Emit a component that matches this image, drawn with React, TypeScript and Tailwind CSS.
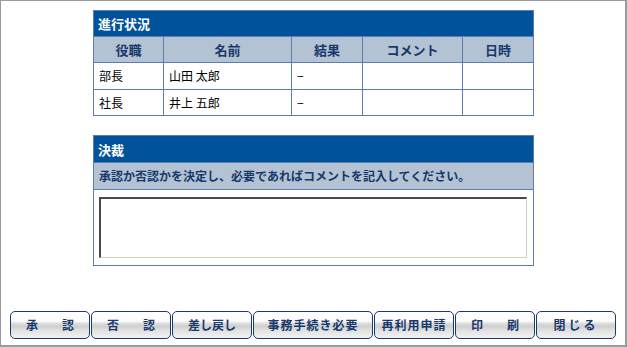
import React from "react";

const font = { fontFamily: '"Noto Sans CJK JP", "Noto Sans", sans-serif' };

const cols = ["役職", "名前", "結果", "コメント", "日時"];
const rows = [
  ["部長", "山田 太郎", "−", "", ""],
  ["社長", "井上 五郎", "−", "", ""],
];

const buttons: { label: string; w: string; track: string }[] = [
  { label: "承　　認", w: "w-[80px]", track: "tracking-[0px]" },
  { label: "否　　認", w: "w-[80px]", track: "tracking-[0px]" },
  { label: "差し戻し", w: "w-[80px]", track: "tracking-[0px]" },
  { label: "事務手続き必要", w: "w-[120px]", track: "tracking-[1px]" },
  { label: "再利用申請", w: "w-[80px]", track: "tracking-[1px]" },
  { label: "印　　刷", w: "w-[80px]", track: "tracking-[0px]" },
  { label: "閉じる", w: "w-[80px]", track: "tracking-[3px]" },
];

export default function App() {
  return (
    <div
      style={font}
      className="w-[627px] h-[347px] bg-white border-t border-l border-r-2 border-b-2 border-[#9a9a9a] flex flex-col box-border overflow-hidden"
    >
      {/* 進行状況 */}
      <div className="pl-[92px] pt-[9px]">
        <div className="w-[441px] border-l border-t border-[#5b7db3]">
          <div className="h-[26px] bg-[#00539b] border-r border-b border-[#5b7db3] flex items-center pl-[4px] text-white text-[13px] font-bold leading-none">
            進行状況
          </div>
          <div className="grid grid-cols-[70px_128px_71px_100px_71px]">
            {cols.map((c) => (
              <div
                key={c}
                className="h-[26px] bg-[#b3c3d3] border-r border-b border-[#5b7db3] flex items-center justify-center text-[#17386b] text-[13px] font-bold leading-none"
              >
                {c}
              </div>
            ))}
            {rows.map((r, ri) =>
              r.map((v, ci) => (
                <div
                  key={ri + "-" + ci}
                  className={
                    (ri === 0 ? "h-[27px] " : "h-[26px] ") +
                    "bg-white border-r border-b border-[#5b7db3] flex items-center pl-[5px] text-black text-[12px] leading-none"
                  }
                >
                  {v}
                </div>
              ))
            )}
          </div>
        </div>
      </div>

      {/* 決裁 */}
      <div className="pl-[92px] mt-[19px]">
        <div className="w-[441px] border border-[#5b7db3]">
          <div className="h-[27px] bg-[#00539b] border-b border-[#5b7db3] flex items-center pl-[4px] text-white text-[13px] font-bold leading-none">
            決裁
          </div>
          <div className="h-[27px] bg-[#b3c3d3] border-b border-[#5b7db3] flex items-center pl-[5px] text-[#17386b] text-[12px] font-bold leading-none">
            承認か否認かを決定し、必要であればコメントを記入してください。
          </div>
          <div className="pt-[7px] pb-[7px] pl-[5px]">
            <textarea
              className="block w-[428px] h-[61px] resize-none bg-white border-t-2 border-l-2 border-b border-r border-t-[#4a4a4a] border-l-[#4a4a4a] border-b-[#d4d0c8] border-r-[#d4d0c8] outline-none"
            />
          </div>
        </div>
      </div>

      {/* Buttons */}
      <div className="mt-auto mb-[6px] pl-[9px] flex gap-[1px]">
        {buttons.map((b) => (
          <button
            key={b.label}
            className={
              b.w +
              " " +
              b.track +
              " h-[28px] rounded-[5px] border border-[#1b3a6b] bg-[linear-gradient(to_bottom,#ffffff_0%,#fbfbfb_35%,#dcdcdc_45%,#cfcfcf_55%,#e2e2e2_72%,#f2f2f2_100%)] text-[#17386b] text-[12px] font-bold leading-none flex items-center justify-center whitespace-nowrap"
            }
          >
            {b.label}
          </button>
        ))}
      </div>
    </div>
  );
}
